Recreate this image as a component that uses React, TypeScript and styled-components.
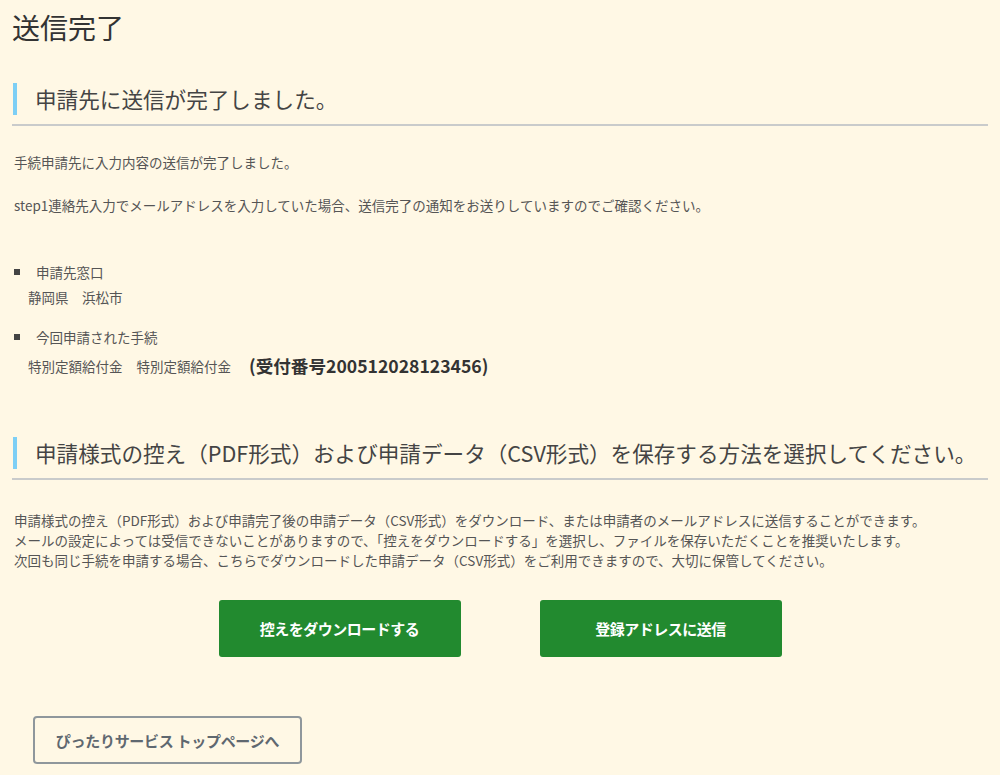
import React from 'react'
import styled, { createGlobalStyle } from 'styled-components'

const GlobalStyle = createGlobalStyle`
    html, body {
        margin: 0;
        padding: 0;
        background: #fff8e5;
    }
    body {
        font-family: "Noto Sans CJK JP", "Noto Sans", "Liberation Sans", sans-serif;
        color: #555;
    }
`

const Page = styled.div`
    min-height: 775px;
    padding: 0 12px 20px;
    box-sizing: border-box;
`

const Title = styled.h1`
    margin: 10px 0 0;
    font-size: 28px;
    line-height: 34px;
    font-weight: 400;
    color: #333;
`

const SectionHeader = styled.div<{ $top: number }>`
    margin-top: ${p => p.$top}px;
    padding-bottom: 9px;
    border-bottom: 2px solid #c9cbcb;
`

const SectionTitle = styled.h2`
    margin: 0 0 0 1px;
    padding-left: 18px;
    border-left: 4px solid #7dcff5;
    font-size: 21.6px;
    line-height: 32px;
    font-weight: 400;
    color: #444;
    white-space: nowrap;
`

const Text = styled.p<{ $top: number; $indent?: number }>`
    margin: ${p => p.$top}px 0 0 ${p => p.$indent ?? 2}px;
    font-size: 13.5px;
    line-height: 20px;
    color: #555;
    white-space: nowrap;
`

const BulletItem = styled.div<{ $top: number }>`
    margin-top: ${p => p.$top}px;
    display: flex;
    align-items: center;
    font-size: 13.5px;
    line-height: 20px;
    color: #555;
    &::before {
        content: '';
        width: 6px;
        height: 6px;
        background: #444;
        margin: 0 16px 0 2px;
    }
`

const ProcedureRow = styled.div`
    margin: 7px 0 0 16px;
    display: flex;
    align-items: center;
    gap: 14px;
    font-size: 13.5px;
    line-height: 24px;
    color: #555;
`

const Receipt = styled.span`
    font-size: 17.6px;
    font-weight: 700;
    color: #333;
    margin-left: 4px;
`

const ButtonRow = styled.div`
    margin-top: 30px;
    display: flex;
    justify-content: center;
    gap: 79px;
`

const PrimaryButton = styled.button`
    width: 242px;
    height: 57px;
    border: none;
    border-radius: 3px;
    background: #228a2f;
    color: #fff;
    font-family: inherit;
    font-size: 15px;
    font-weight: 700;
    letter-spacing: -0.5px;
    cursor: pointer;
`

const BackButton = styled.button`
    margin: 59px 0 0 21px;
    width: 269px;
    height: 48px;
    border: 2px solid #8f979c;
    border-radius: 4px;
    background: transparent;
    color: #5f6870;
    font-family: inherit;
    font-size: 15px;
    font-weight: 700;
    letter-spacing: -0.3px;
    cursor: pointer;
`

export default function App() {
    return <>
        <GlobalStyle />
        <Page>
            <Title>送信完了</Title>

            <SectionHeader $top={39}>
                <SectionTitle>申請先に送信が完了しました。</SectionTitle>
            </SectionHeader>
            <Text $top={26}>手続申請先に入力内容の送信が完了しました。</Text>
            <Text $top={23}>step1連絡先入力でメールアドレスを入力していた場合、送信完了の通知をお送りしていますのでご確認ください。</Text>

            <BulletItem $top={47}>申請先窓口</BulletItem>
            <Text $top={5} $indent={16}>静岡県　浜松市</Text>

            <BulletItem $top={20}>今回申請された手続</BulletItem>
            <ProcedureRow>
                <span>特別定額給付金</span>
                <span>特別定額給付金</span>
                <Receipt>(受付番号200512028123456)</Receipt>
            </ProcedureRow>

            <SectionHeader $top={59}>
                <SectionTitle>申請様式の控え（PDF形式）および申請データ（CSV形式）を保存する方法を選択してください。</SectionTitle>
            </SectionHeader>
            <Text $top={30}>
                申請様式の控え（PDF形式）および申請完了後の申請データ（CSV形式）をダウンロード、または申請者のメールアドレスに送信することができます。<br />
                メールの設定によっては受信できないことがありますので、「控えをダウンロードする」を選択し、ファイルを保存いただくことを推奨いたします。<br />
                次回も同じ手続を申請する場合、こちらでダウンロードした申請データ（CSV形式）をご利用できますので、大切に保管してください。
            </Text>

            <ButtonRow>
                <PrimaryButton>控えをダウンロードする</PrimaryButton>
                <PrimaryButton>登録アドレスに送信</PrimaryButton>
            </ButtonRow>

            <BackButton>ぴったりサービス トップページへ</BackButton>
        </Page>
    </>
}
